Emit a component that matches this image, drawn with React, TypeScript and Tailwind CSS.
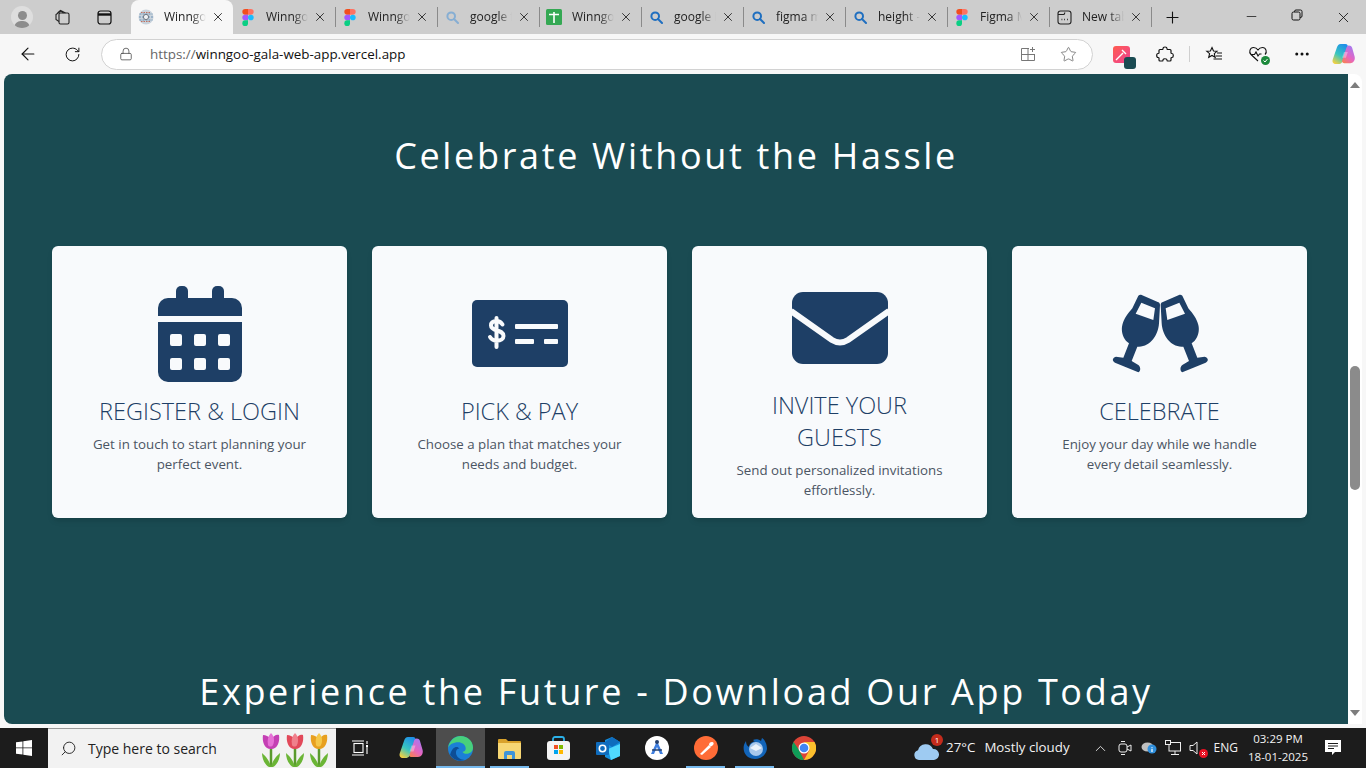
import React from 'react';
import { ArrowLeft, RotateCw, Lock, Star, Plus, X, Minus, Search, MoreHorizontal, ChevronUp } from 'lucide-react';

const FigmaIcon = () => (
    <svg width="12" height="17" viewBox="0 0 12 18">
        <path d="M0 3a3 3 0 0 1 3-3h3v6H3a3 3 0 0 1-3-3z" fill="#f24e1e" />
        <path d="M6 0h3a3 3 0 0 1 0 6H6z" fill="#ff7262" />
        <path d="M0 9a3 3 0 0 1 3-3h3v6H3a3 3 0 0 1-3-3z" fill="#a259ff" />
        <circle cx="9" cy="9" r="3" fill="#1abcfe" />
        <path d="M0 15a3 3 0 0 1 3-3h3v3a3 3 0 0 1-6 0z" fill="#0acf83" />
    </svg>
);

const GlobeIcon = () => (
    <svg width="16" height="16" viewBox="0 0 16 16">
        <circle cx="8" cy="8" r="7.5" fill="#c9d3dc" />
        <path d="M1.5 5h13M1 8h14M1.5 11h13" stroke="#6f93b5" strokeWidth="1.2" strokeDasharray="2 1" />
        <path d="M3 3.5h10M3 12.5h10" stroke="#c0705f" strokeWidth="1" strokeDasharray="1.5 1" />
        <circle cx="8" cy="8" r="2.6" fill="#eef1f4" stroke="#55606b" strokeWidth="0.8" />
    </svg>
);

const SheetIcon = () => (
    <svg width="16" height="16" viewBox="0 0 16 16">
        <rect width="16" height="16" rx="1.5" fill="#34a853" />
        <path d="M3 5.5h10M8 3v11" stroke="#fff" strokeWidth="1.6" />
    </svg>
);

const TabSearchIcon = ({ faded }: { faded?: boolean }) => (
    <svg width="13" height="13" viewBox="0 0 13 13" fill="none" stroke={faded ? '#86aed3' : '#1f6fc0'} strokeWidth="2">
        <circle cx="5.2" cy="5.2" r="3.8" />
        <path d="M8 8l4 4" strokeLinecap="round" />
    </svg>
);

const NewTabIcon = () => (
    <svg width="15" height="15" viewBox="0 0 15 15" fill="none" stroke="#222" strokeWidth="1.1">
        <rect x="1" y="1" width="13" height="13" rx="2.5" />
        <path d="M1 4.5h6l1-2" />
        <path d="M4.5 9.5h.8M7.2 9.5h.8M10 9.5h.8" strokeWidth="1.4" />
    </svg>
);

const tabs = [
    { title: 'Winngoo Gala', icon: <GlobeIcon />, active: true },
    { title: 'Winngoo Design', icon: <FigmaIcon /> },
    { title: 'Winngoo Gala', icon: <FigmaIcon /> },
    { title: 'google fonts', icon: <TabSearchIcon faded /> },
    { title: 'Winngoo sheet', icon: <SheetIcon /> },
    { title: 'google icons', icon: <TabSearchIcon /> },
    { title: 'figma mobile', icon: <TabSearchIcon /> },
    { title: 'height - Search', icon: <TabSearchIcon /> },
    { title: 'Figma Mobile', icon: <FigmaIcon /> },
    { title: 'New tab', icon: <NewTabIcon /> },
];

const Tab = ({ title, icon, active }: { title: string; icon: React.ReactNode; active?: boolean }) => (
    <div className={`relative flex h-[34px] w-[102px] shrink-0 items-center pl-[7px] ${active ? 'rounded-t-lg bg-[#f7f7f7]' : ''}`}>
        <span className="flex w-[16px] shrink-0 justify-center">{icon}</span>
        <span className="ml-[10px] w-[42px] overflow-hidden whitespace-nowrap text-[12px] text-[#222] [mask-image:linear-gradient(to_right,black_65%,transparent)]">
            {title}
        </span>
        <X size={14} strokeWidth={1.5} className="ml-[5px] text-[#222]" />
        {!active && <span className="absolute right-[-1px] top-[7px] h-[20px] w-px bg-[#8a8a8a]" />}
    </div>
);

const TitleBar = () => (
    <div className="flex h-[34px] shrink-0 items-center bg-[#cdcdcd]">
        <div className="flex w-[44px] justify-center">
            <div className="flex h-[22px] w-[22px] flex-col items-center justify-end overflow-hidden rounded-full bg-[#dedede]">
                <span className="h-[9px] w-[9px] rounded-full bg-[#8c8c8c]" />
                <span className="mt-[1px] h-[7px] w-[16px] rounded-t-full bg-[#8c8c8c]" />
            </div>
        </div>
        <div className="flex w-[36px] justify-center">
            <svg width="17" height="17" viewBox="0 0 17 17" fill="none" stroke="#222" strokeWidth="1.1">
                <rect x="5" y="4" width="10" height="11" rx="1.5" />
                <path d="M5 12.5 2 10.5V5.5l5-3.5 2.5 2M3.5 4l3-2.5 5 2.5" />
            </svg>
        </div>
        <div className="flex w-[48px] justify-center">
            <svg width="15" height="15" viewBox="0 0 15 15" fill="none" stroke="#111" strokeWidth="1.2">
                <rect x="1" y="1" width="13" height="13" rx="2.5" />
                <path d="M1 4.5h13" strokeWidth="2.4" />
            </svg>
        </div>
        <div className="w-[3px]" />
        {tabs.map((t, i) => (
            <Tab key={i} title={t.title} icon={t.icon} active={t.active} />
        ))}
        <div className="flex w-[42px] justify-center">
            <Plus size={19} strokeWidth={1.4} className="text-[#111]" />
        </div>
        <div className="ml-auto flex">
            <div className="flex w-[46px] justify-center">
                <Minus size={15} strokeWidth={1.2} className="text-[#111]" />
            </div>
            <div className="flex w-[46px] justify-center">
                <svg width="12" height="12" viewBox="0 0 12 12" fill="none" stroke="#111" strokeWidth="1">
                    <rect x="1" y="3" width="8" height="8" rx="1.5" />
                    <path d="M3.5 3V2.5A1.5 1.5 0 0 1 5 1h4.5A1.5 1.5 0 0 1 11 2.5V7a1.5 1.5 0 0 1-1.5 1.5H9" />
                </svg>
            </div>
            <div className="flex w-[46px] justify-center">
                <X size={17} strokeWidth={1.2} className="text-[#111]" />
            </div>
        </div>
    </div>
);

// same id is fine here, both copies draw the same gradients
const CopilotIcon = ({ size = 22 }: { size?: number }) => (
    <svg width={size} height={size} viewBox="0 0 24 24">
        <defs>
            <linearGradient id="copA" x1="0.7" y1="0" x2="0.2" y2="1">
                <stop offset="0" stopColor="#1f8fe8" />
                <stop offset="0.55" stopColor="#38c6c0" />
                <stop offset="1" stopColor="#f6d13f" />
            </linearGradient>
            <linearGradient id="copB" x1="0.8" y1="0" x2="0.2" y2="1">
                <stop offset="0" stopColor="#9f7bf5" />
                <stop offset="0.6" stopColor="#e765c0" />
                <stop offset="1" stopColor="#f7805a" />
            </linearGradient>
        </defs>
        <path d="M9 1h5c2 0 3 1.500 2.300 3.500L12 17c-.8 2.500-2 5-5.500 5H4C1.500 22 0 20 .7 17.500L5 5C5.800 2.500 7 1 9 1z" fill="url(#copA)" />
        <path d="M17.500 2.500c2.500 0 3 1 3.500 2.500l2.600 9c.8 3-.8 7-4.600 7h-6c-2 0-3-1-2.300-3l4-12c.6-2 1.300-3.500 2.800-3.500z" fill="url(#copB)" />
        <path d="M12.500 9.500h4l-2 6h-4z" fill="#fff" fillOpacity="0.35" />
    </svg>
);

const ToolBar = () => (
    <div className="flex h-[40px] shrink-0 items-center bg-[#f7f7f7]">
        <div className="flex w-[56px] justify-center">
            <ArrowLeft size={20} strokeWidth={1.4} className="text-[#111]" />
        </div>
        <div className="flex w-[32px] justify-center">
            <RotateCw size={17} strokeWidth={1.4} className="text-[#111]" />
        </div>
        <div className="ml-[13px] flex h-[31px] w-[992px] items-center rounded-full border border-[#d2d2d2] bg-white pl-[17px] pr-[15px]">
            <Lock size={14} strokeWidth={1.3} className="text-[#444]" />
            <span className="ml-[17px] text-[13.4px] leading-[28px] text-[#111]">
                <span className="text-[#666]">https://</span>winngoo-gala-web-app.vercel.app
            </span>
            <svg className="ml-auto" width="16" height="16" viewBox="0 0 16 16" fill="none" stroke="#777" strokeWidth="1">
                <path d="M9 2.500H1.500v12h13V8M1.500 8.500h13M8 2.500v12M12.500 1v5M10 3.500h5" />
            </svg>
            <Star size={17} strokeWidth={1.1} className="ml-[24px] text-[#666]" />
        </div>
        <div className="relative ml-[20px] h-[17px] w-[17px] rounded-[3px] bg-gradient-to-br from-[#ff5b4d] to-[#ef3f8f]">
            <span className="absolute bottom-[-6px] right-[-6px] h-[12px] w-[12px] rounded-[3px] bg-[#1a4b52]" />
            <svg width="17" height="17" viewBox="0 0 17 17" stroke="#fff" strokeWidth="1.4">
                <path d="M3 14 10 7M9 4l4 4" />
            </svg>
        </div>
        <div className="ml-[26px] flex">
            <svg width="18" height="18" viewBox="0 0 18 18" fill="none" stroke="#111" strokeWidth="1.2" strokeLinejoin="round">
                <path d="M7 3.500C7 1.500 11 1.500 11 3.500c0 .6 0 1 .5 1H14c.8 0 1 .4 1 1v2.500c0 .5.4.5 1 .5 1.700 0 1.700 4 0 4-.6 0-1 0-1 .5V15c0 .6-.4 1-1 1h-2.500c-.5 0-.5-.4-.5-1 0-1.700-4-1.700-4 0 0 .6 0 1-.5 1H4c-.6 0-1-.4-1-1v-2c0-.5-.4-.5-1-.5-1.700 0-1.700-4 0-4 .6 0 1 0 1-.5V5.500c0-.6.4-1 1-1h2.500c.5 0 .5-.4.5-1z" />
            </svg>
        </div>
        <span className="ml-[15px] h-[16px] w-px bg-[#cfcfcf]" />
        <div className="ml-[15px] flex">
            <svg width="18" height="18" viewBox="0 0 18 18" fill="none" stroke="#111" strokeWidth="1.1">
                <path d="M7 2.500l1.500 3.500 3.500.3-2.700 2.300.9 3.700L7 10.500l-3.300 1.800.9-3.700L1.800 6.300l3.600-.3z" />
                <path d="M12 8h5M11 11h6M8.500 14H17" />
            </svg>
        </div>
        <div className="relative ml-[25px] flex">
            <svg width="20" height="18" viewBox="0 0 20 18" fill="none" stroke="#111" strokeWidth="1.1">
                <path d="M10 16 3 9.500C.5 7 2 2.500 5.500 2.500c2 0 3.500 1 4.500 2.500 1-1.500 2.500-2.500 4.500-2.500 3.500 0 5 4.500 2.500 7" />
                <path d="M3 9.500h3.500l1.500-2.500 2 4 1.500-2h2" />
            </svg>
            <svg className="absolute bottom-[-2px] right-[-2px]" width="9" height="9" viewBox="0 0 9 9">
                <circle cx="4.500" cy="4.500" r="4.500" fill="#1c8a3c" />
                <path d="M2.500 4.500l1.500 1.500 2.500-3" fill="none" stroke="#fff" strokeWidth="1" />
            </svg>
        </div>
        <div className="ml-[25px] flex">
            <MoreHorizontal size={18} strokeWidth={2} className="text-[#111]" />
        </div>
        <div className="ml-[21px] flex">
            <CopilotIcon size={23} />
        </div>
    </div>
);

const CalendarGlyph = () => (
    <svg width="96" height="96" viewBox="0 0 96 96" fill="#1e3f66">
        <rect x="24" y="0" width="12" height="20" rx="5" />
        <rect x="60" y="0" width="12" height="20" rx="5" />
        <path d="M6 30V22a10 10 0 0 1 10-10h64a10 10 0 0 1 10 10v8z" />
        <path fillRule="evenodd" d="M6 36h84v50a10 10 0 0 1-10 10H16A10 10 0 0 1 6 86zM18 50v8a2 2 0 0 0 2 2h8a2 2 0 0 0 2-2v-8a2 2 0 0 0-2-2h-8a2 2 0 0 0-2 2zm24 0v8a2 2 0 0 0 2 2h8a2 2 0 0 0 2-2v-8a2 2 0 0 0-2-2h-8a2 2 0 0 0-2 2zm24 0v8a2 2 0 0 0 2 2h8a2 2 0 0 0 2-2v-8a2 2 0 0 0-2-2h-8a2 2 0 0 0-2 2zM18 74v8a2 2 0 0 0 2 2h8a2 2 0 0 0 2-2v-8a2 2 0 0 0-2-2h-8a2 2 0 0 0-2 2zm24 0v8a2 2 0 0 0 2 2h8a2 2 0 0 0 2-2v-8a2 2 0 0 0-2-2h-8a2 2 0 0 0-2 2zm24 0v8a2 2 0 0 0 2 2h8a2 2 0 0 0 2-2v-8a2 2 0 0 0-2-2h-8a2 2 0 0 0-2 2z" />
    </svg>
);

const BillGlyph = () => (
    <svg width="96" height="96" viewBox="0 0 96 96">
        <rect x="0" y="14" width="96" height="67" rx="5" fill="#1e3f66" />
        <path d="M30.500 38.500c-1.500-2.500-3.500-3.500-6-3.500-3.500 0-5.500 1.800-5.500 4.500 0 6.500 12.500 3.500 12.500 10.500 0 2.800-2.700 4.800-6.500 4.800-3 0-5.500-1.300-7-3.800M24.500 32v29" fill="none" stroke="#f8fafc" strokeWidth="4" strokeLinecap="round" />
        <rect x="43" y="38" width="43" height="5" rx="1" fill="#f8fafc" />
        <rect x="43" y="53" width="19" height="5" rx="1" fill="#f8fafc" />
        <rect x="72" y="53" width="14" height="5" rx="1" fill="#f8fafc" />
    </svg>
);

const EnvelopeGlyph = () => (
    <svg width="96" height="96" viewBox="0 0 96 96">
        <rect x="0" y="12" width="96" height="72" rx="11" fill="#1e3f66" />
        <path d="M-1 31 40 60q8 5 16 0l41-29" fill="none" stroke="#f8fafc" strokeWidth="6" />
    </svg>
);

const glassPath =
    'M145 32c3-3 7-3 10-2l50 22c3 1 5 4 5 8l-3 55c-2 35-25 70-60 70l-5 0-17 43 20 12c7 4 8 20 0 22l-70-29c-10-5-8-15 3-18l22 3 17-43c-17-10-25-35-20-55 5-20 17-35 30-50zm9 21-17 33 53 19 5-35z';

const CheersGlyph = () => (
    <svg width="96" height="96" viewBox="0 0 288 288" fill="#1e3f66">
        <g transform="translate(-66 -3)">
            <path fillRule="evenodd" d={glassPath} />
            <g transform="matrix(-1 0 0 1 422 0)">
                <path fillRule="evenodd" d={glassPath} />
            </g>
        </g>
    </svg>
);

const steps = [
    { icon: <CalendarGlyph />, title: 'REGISTER & LOGIN', text: 'Get in touch to start planning your perfect event.', top: 'pt-[40px]' },
    { icon: <BillGlyph />, title: 'PICK & PAY', text: 'Choose a plan that matches your needs and budget.', top: 'pt-[40px]' },
    { icon: <EnvelopeGlyph />, title: 'INVITE YOUR GUESTS', text: 'Send out personalized invitations effortlessly.', top: 'pt-[34px]' },
    { icon: <CheersGlyph />, title: 'CELEBRATE', text: 'Enjoy your day while we handle every detail seamlessly.', top: 'pt-[40px]' },
];

const StepCard = ({ icon, title, text, top }: { icon: React.ReactNode; title: string; text: string; top: string }) => (
    <div className={`flex h-[272px] w-[295px] flex-col items-center rounded-md bg-[#f8fafc] px-[36px] text-center shadow-md ${top}`}>
        {icon}
        <h3 className="mt-[13px] text-[23.5px] font-[350] leading-[32px] text-[#1e3f66]">{title}</h3>
        <p className="mt-[7px] text-[13.3px] leading-[20px] text-[#4b5563]">{text}</p>
    </div>
);

const Page = () => (
    <main className="ml-[4px] h-[650px] w-[1344px] shrink-0 overflow-hidden rounded-l-lg bg-[#1a4b52] pt-[58px] text-center">
        <h2 className="text-[36px] font-normal leading-[48px] tracking-[0.074em] text-white">Celebrate Without the Hassle</h2>
        <div className="mt-[66px] flex gap-[25px] pl-[48px]">
            {steps.map((s) => (
                <StepCard key={s.title} {...s} />
            ))}
        </div>
        <h2 className="mt-[150px] text-[36px] font-normal leading-[48px] tracking-[0.074em] text-white">
            Experience the Future - Download Our App Today
        </h2>
    </main>
);

const ScrollBar = () => (
    <div className="relative h-[650px] w-[14px] shrink-0 rounded-tr-lg bg-white">
        <span className="absolute left-[2px] top-[8px] h-0 w-0 border-x-[5px] border-b-[6px] border-x-transparent border-b-[#7d7d7d]" />
        <span className="absolute left-[2px] top-[292px] h-[124px] w-[10px] rounded-full bg-[#8b8b8b]" />
        <span className="absolute bottom-[8px] left-[2px] h-0 w-0 border-x-[5px] border-t-[6px] border-x-transparent border-t-[#7d7d7d]" />
    </div>
);

const TaskIcon = ({ children, active, open }: { children: React.ReactNode; active?: boolean; open?: boolean }) => (
    <div className={`relative flex h-[40px] w-[49px] items-center justify-center ${active ? 'bg-[#4d4d4d]' : ''}`}>
        {children}
        {(open || active) && (
            <span className={`absolute bottom-0 h-[2px] bg-[#76b9ed] ${active ? 'inset-x-0' : 'inset-x-[5px]'}`} />
        )}
    </div>
);

const Tulip = ({ color, inner }: { color: string; inner: string }) => (
    <svg width="24" height="36" viewBox="0 0 24 36">
        <path d="M12 16v20" stroke="#5a9a2e" strokeWidth="2.500" />
        <path d="M12 36C10 28 6 25 3 22c0 6 3 12 7 14zM12 36c2-8 6-11 9-14 0 6-3 12-7 14z" fill="#6bb536" />
        <path d="M4 4c3 0 5 1 8 4 3-3 5-5 8-4 1 6-1 14-8 14S3 10 4 4z" fill={color} />
        <path d="M12 2c3 3 4 7 2 12-1 2-4 2-5 0-1-5 0-9 3-12z" fill={inner} />
    </svg>
);

const TrayCell = ({ children }: { children: React.ReactNode }) => (
    <div className="relative flex w-[24px] justify-center">{children}</div>
);

const TaskBar = () => (
    <div className="flex h-[40px] shrink-0 items-center bg-[#1c1c1c] text-[#f2f2f2]">
        <div className="flex h-[40px] w-[48px] items-center justify-center">
            <svg width="16" height="16" viewBox="0 0 16 16" fill="#fff">
                <path d="M0 2.300 6.500 1.400V7.500H0zM7.300 1.300 16 0v7.500H7.300zM0 8.300h6.500v6.300L0 13.700zM7.300 8.300H16V16l-8.700-1.300z" />
            </svg>
        </div>
        <div className="flex h-[40px] w-[288px] items-center overflow-hidden border-t border-[#9a9a9a] bg-[#f2f2f2] pl-[12px] text-[#222]">
            <Search size={17} strokeWidth={1.3} className="-scale-x-100" />
            <span className="ml-[11px] text-[14px]">Type here to search</span>
            <div className="ml-auto flex pr-[5px]">
                <Tulip color="#c43fb4" inner="#e671d6" />
                <Tulip color="#e2495a" inner="#f0808c" />
                <Tulip color="#e8a020" inner="#f5c84a" />
            </div>
        </div>
        <TaskIcon>
            <svg width="18" height="16" viewBox="0 0 18 16" fill="none" stroke="#fff" strokeWidth="1.100">
                <rect x="2" y="3.500" width="9" height="9" />
                <path d="M0 1h12M0 15h12M15 1v3M15 7v7" />
                <rect x="14" y="5" width="2" height="2" fill="#fff" stroke="none" />
            </svg>
        </TaskIcon>
        <div className="ml-[1px]">
            <TaskIcon>
                <CopilotIcon size={24} />
            </TaskIcon>
        </div>
        <div className="ml-[1px]">
            <TaskIcon active>
                <svg width="25" height="25" viewBox="0 0 24 24">
                    <circle cx="12" cy="12" r="12" fill="#1b7fd6" />
                    <path d="M0 12C1 4 7 0 12 0c7 0 12 5 12 11 0 4-3 6-6 6-2 0-4-1-4-2 2 0 3-1 3-3 0-4-4-6-7-6C5 6 1 8 0 12z" fill="#47d07c" />
                    <path d="M11 12c-3 0-4 3-3 6 1 3 5 5 8 5-5 2-11 0-14-5C4 10 9 9 11 12z" fill="#0d4e96" />
                </svg>
            </TaskIcon>
        </div>
        <TaskIcon open>
            <svg width="23" height="21" viewBox="0 0 23 21">
                <path d="M0 2a1 1 0 0 1 1-1h7l2 2h12a1 1 0 0 1 1 1v3H0z" fill="#d9a22b" />
                <path d="M0 5h23v15a1 1 0 0 1-1 1H1a1 1 0 0 1-1-1z" fill="#f7d774" />
                <path d="M6 21v-6a2 2 0 0 1 2-2h7a2 2 0 0 1 2 2v6h-3v-4H9v4z" fill="#3f94d8" />
            </svg>
        </TaskIcon>
        <TaskIcon>
            <svg width="23" height="24" viewBox="0 0 23 24">
                <path d="M6 6V3a2 2 0 0 1 2-2h7a2 2 0 0 1 2 2v3" fill="none" stroke="#2bb0e8" strokeWidth="1.800" />
                <rect x="0" y="5" width="23" height="19" rx="3" fill="#f4f4f4" />
                <rect x="7" y="9" width="4" height="4" fill="#f25022" />
                <rect x="12" y="9" width="4" height="4" fill="#7fba00" />
                <rect x="7" y="14" width="4" height="4" fill="#00a4ef" />
                <rect x="12" y="14" width="4" height="4" fill="#ffb900" />
            </svg>
        </TaskIcon>
        <TaskIcon>
            <svg width="24" height="23" viewBox="0 0 24 23">
                <path d="M9 3 16 0l8 5v14l-9 4-6-3z" fill="#1490df" />
                <path d="M16 0l8 5-8 5-7-5z" fill="#0f6cbd" />
                <path d="M12 12 24 7v12l-9 4z" fill="#50d9ff" />
                <rect x="0" y="5" width="13" height="13" rx="1" fill="#0f6cbd" />
                <circle cx="6.500" cy="11.500" r="3.200" fill="none" stroke="#fff" strokeWidth="1.600" />
            </svg>
        </TaskIcon>
        <TaskIcon>
            <svg width="24" height="24" viewBox="0 0 24 24">
                <circle cx="12" cy="12" r="12" fill="#fff" />
                <path d="M12 5 6 18h3l3-7 3 7h3z" fill="#3f7fe0" />
                <circle cx="12" cy="6" r="2" fill="#24406e" />
                <path d="M7 14h10" stroke="#24406e" strokeWidth="1.500" />
            </svg>
        </TaskIcon>
        <TaskIcon open>
            <svg width="24" height="24" viewBox="0 0 24 24">
                <circle cx="12" cy="12" r="12" fill="#ff6c37" />
                <path d="M6 18 15 9l2 2-9 8z" fill="#fff" />
                <path d="M15 9c0-2 1-3 3-3s2 2 1 3-2 2-3 1z" fill="#fff" />
            </svg>
        </TaskIcon>
        <TaskIcon open>
            <svg width="24" height="24" viewBox="0 0 24 24">
                <path d="M3 5C1 8 0 11 1 15c1 5 6 8 11 8 6 0 11-4 12-10 0-5-2-9-5-11l-1 3c-2-2-6-2-8-1 1 1 1 1 2 1-3 1-6 3-6 6-2-1-3-3-3-6z" fill="#1264b8" />
                <circle cx="13" cy="13" r="7" fill="#a8c8ec" />
                <path d="M7 12l6 3 6-3-6-4z" fill="#eaf2fb" />
            </svg>
        </TaskIcon>
        <TaskIcon>
            <svg width="24" height="24" viewBox="0 0 24 24">
                <circle cx="12" cy="12" r="12" fill="#db4437" />
                <path d="M12 6h10.500A12 12 0 0 1 12 24l5.500-10z" fill="#fbc02d" />
                <path d="M12 24A12 12 0 0 1 1.600 6L7 14z" fill="#0f9d58" />
                <circle cx="12" cy="12" r="5.500" fill="#fff" />
                <circle cx="12" cy="12" r="4.300" fill="#4285f4" />
            </svg>
        </TaskIcon>
        <div className="ml-auto flex items-center pr-[25px] text-[13.3px]">
            <div className="relative flex h-[24px] w-[26px] items-end">
                <svg width="25" height="17" viewBox="0 0 25 17">
                    <path d="M5 17a5 5 0 0 1-1-9.800A8 8 0 0 1 19 6a5.500 5.500 0 0 1 1 11z" fill="#9ecbf2" />
                </svg>
                <span className="absolute right-[-3px] top-[-2px] flex h-[12px] w-[12px] items-center justify-center rounded-full bg-[#c42b1c] text-[8px] text-white">
                    1
                </span>
            </div>
            <span className="ml-[6px]">27°C</span>
            <span className="ml-[9px]">Mostly cloudy</span>
            <div className="ml-[19px] flex">
                <TrayCell>
                    <ChevronUp size={17} strokeWidth={1.200} />
                </TrayCell>
                <TrayCell>
                    <svg width="14" height="16" viewBox="0 0 14 16" fill="none" stroke="#eee" strokeWidth="1">
                        <rect x="1" y="4" width="8" height="8" rx="2" />
                        <path d="M9 7l4-2v6l-4-2M3 1.500h4M3 14.500h4" />
                    </svg>
                </TrayCell>
                <TrayCell>
                    <svg width="16" height="14" viewBox="0 0 16 14">
                        <ellipse cx="6.500" cy="7" rx="6" ry="4.500" fill="#bfbfbf" />
                        <circle cx="11" cy="9" r="4.500" fill="#2f8fdc" />
                        <path d="M11 7v.8M11 8.800V12" stroke="#fff" strokeWidth="1.200" />
                    </svg>
                </TrayCell>
                <TrayCell>
                    <svg width="16" height="16" viewBox="0 0 16 16" fill="none" stroke="#eee" strokeWidth="1">
                        <rect x="4" y="2.500" width="11.500" height="8.500" />
                        <rect x="0.500" y="0.500" width="5" height="4" fill="#1c1c1c" />
                        <path d="M10 11v3M6 14.500h8" />
                    </svg>
                </TrayCell>
                <TrayCell>
                    <svg width="16" height="16" viewBox="0 0 16 16" fill="none" stroke="#eee" strokeWidth="1">
                        <path d="M1 5.500h3L8 2v12L4 10.500H1z" />
                    </svg>
                    <svg className="absolute bottom-[-1px] right-[1px]" width="9" height="9" viewBox="0 0 9 9">
                        <circle cx="4.500" cy="4.500" r="4.500" fill="#e81123" />
                        <path d="M3 3l3 3M6 3l-3 3" stroke="#fff" strokeWidth="1" />
                    </svg>
                </TrayCell>
            </div>
            <span className="ml-[5px] text-[12px]">ENG</span>
            <div className="ml-[9px] flex w-[62px] flex-col items-center whitespace-nowrap text-[11.5px] leading-[18px]">
                <span>03:29 PM</span>
                <span>18-01-2025</span>
            </div>
            <svg className="ml-[16px]" width="16" height="16" viewBox="0 0 16 16" fill="#fff">
                <path d="M0 0h16v12h-6l-3 3v-3H0z" />
                <path d="M3 3.500h10M3 6h10M3 8.500h6" stroke="#1c1c1c" strokeWidth="1" />
            </svg>
        </div>
    </div>
);

const App: React.FC = () => {
    return (
        <div className="flex h-screen w-full flex-col overflow-hidden bg-[#f7f7f7] font-['Open_Sans','Noto_Sans',sans-serif]">
            <TitleBar />
            <ToolBar />
            <div className="flex h-[654px] shrink-0 items-start">
                <Page />
                <ScrollBar />
            </div>
            <TaskBar />
        </div>
    );
};

export default App;
